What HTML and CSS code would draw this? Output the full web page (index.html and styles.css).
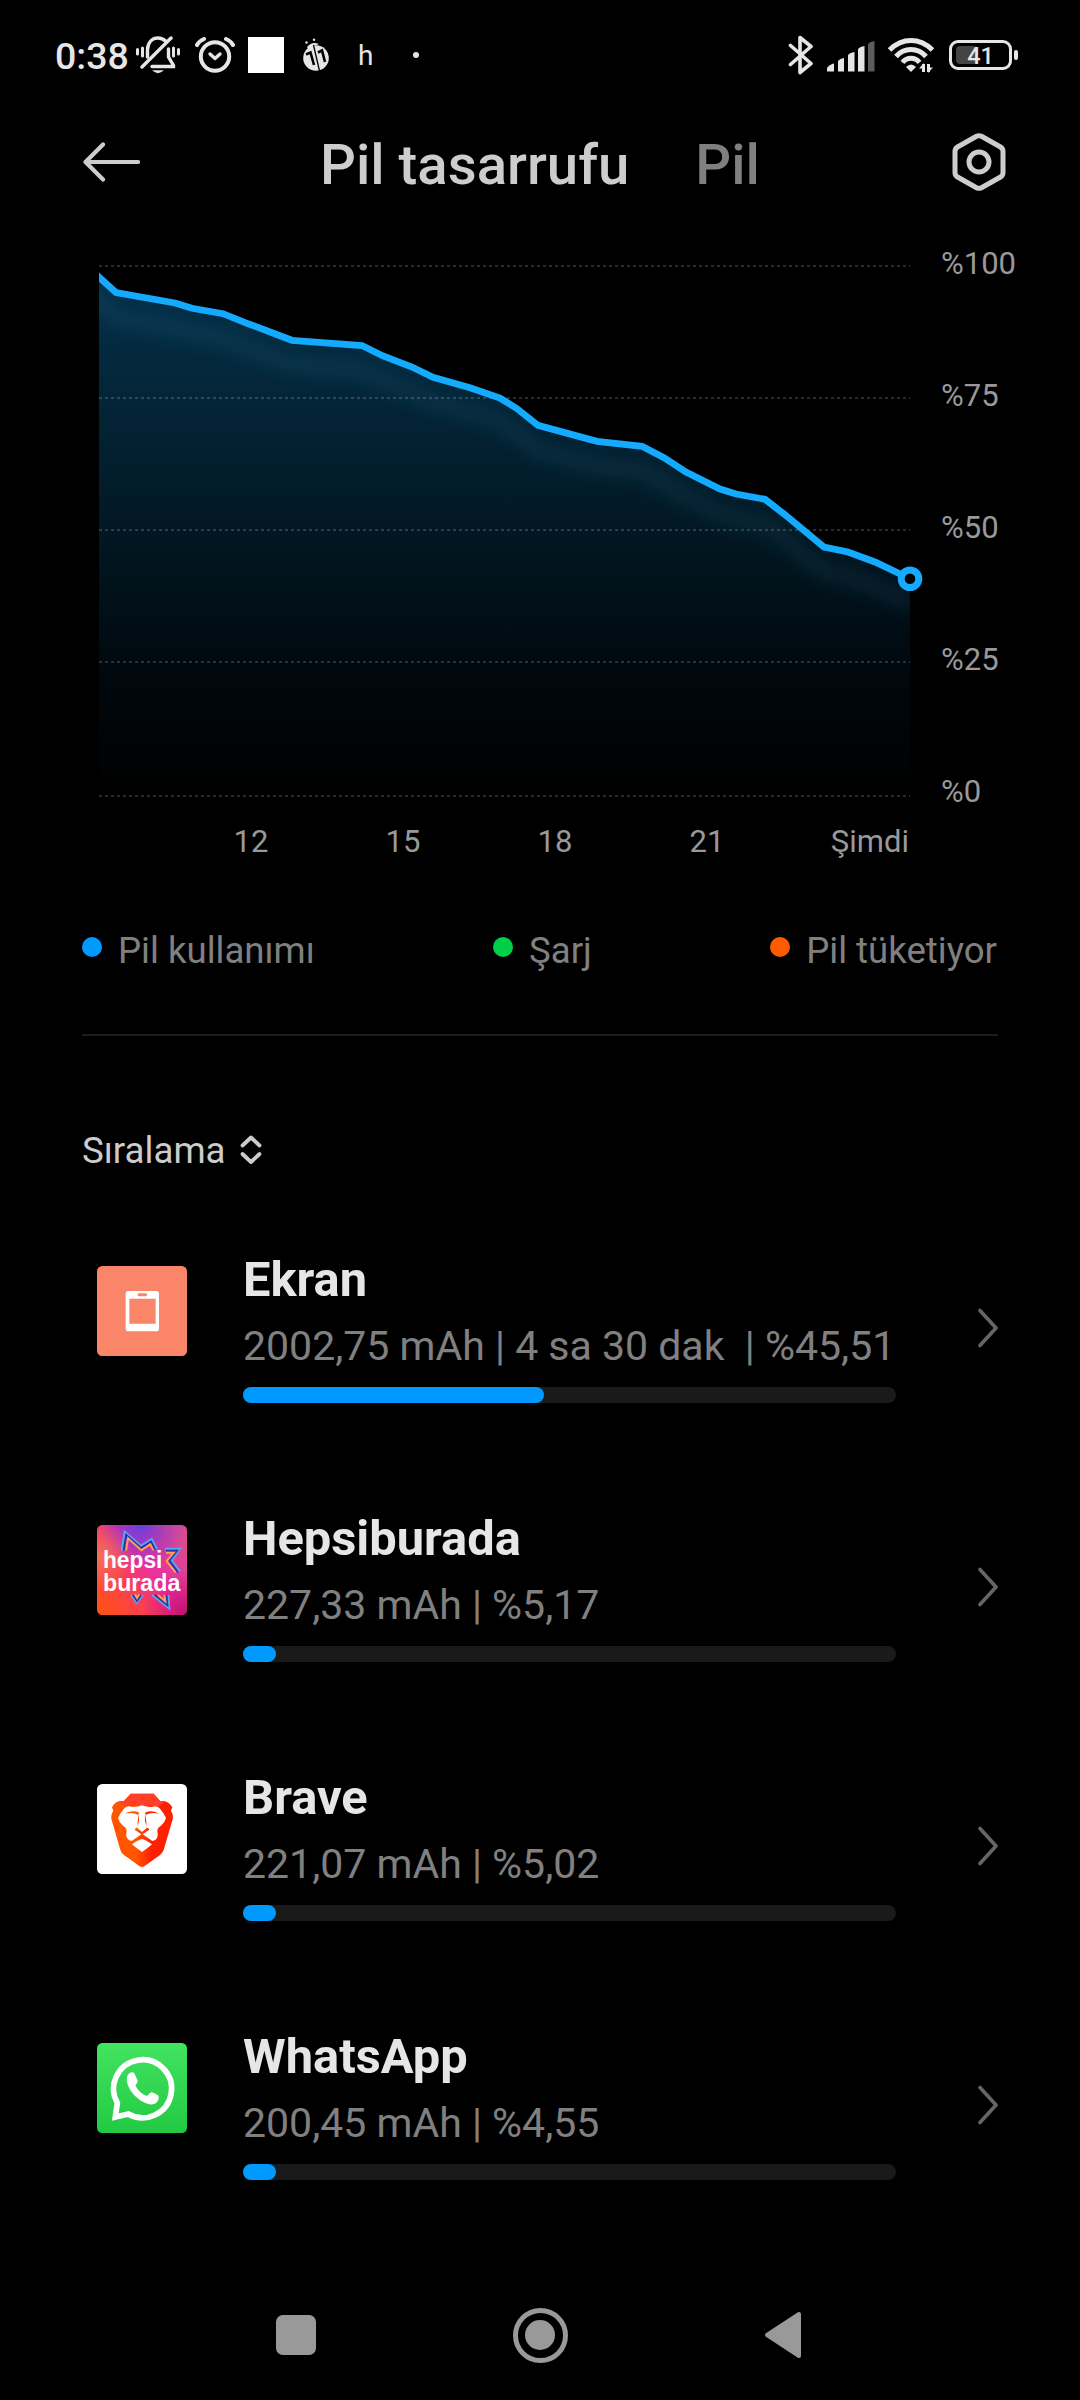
FILE: index.html
```html
<!DOCTYPE html>
<html lang="tr">
<head>
  <meta charset="UTF-8">
  <title>Pil tasarrufu</title>
  <link rel="stylesheet" href="styles.css">
</head>
<body>

  <div class="status-bar">
    <span class="clock">0:38</span>
    <svg class="ic-bell" width="44" height="38" viewBox="0 0 44 38" fill="none" stroke="#e6e6e6" stroke-width="3.4" stroke-linecap="round">
      <path d="M11.5 21V13.500C12 6 16.500 2 22 2C25 2 27.500 3 29.500 5M32.500 13V21L37.500 29.500V30.500H16"/>
      <path d="M6 31L35 2"/>
      <path d="M1.500 13.500V18M6.500 12V20M37.500 12V20M42.500 13.500V18" stroke-width="3"/>
      <path d="M16 34.300H28Q22 40 16 34.300Z" fill="#e6e6e6" stroke="none"/>
    </svg>
    <svg class="ic-alarm" width="40" height="37" viewBox="0 0 40 37" fill="none" stroke="#e6e6e6" stroke-width="4" stroke-linecap="round">
      <circle cx="20" cy="19.500" r="14.200"/>
      <path d="M15 17L20 21.500L25 17" stroke-width="3.400" stroke-linejoin="round"/>
      <path d="M2 8Q4 4 9 2M31 2Q36 4 38 8"/>
    </svg>
    <span class="square"></span>
    <svg class="ic-bug" width="26" height="34" viewBox="0 0 26 34">
      <circle cx="13" cy="20" r="12.800" fill="#e6e6e6"/>
      <path d="M4 9Q9 3 16 6Q9 8 6 12Z" fill="#e6e6e6"/>
      <circle cx="3.500" cy="4.500" r="1.200" fill="#e6e6e6"/>
      <circle cx="11" cy="1.800" r="1.200" fill="#e6e6e6"/>
      <path d="M10.500 7L16.500 33" stroke="#000" fill="none" stroke-width="1.300"/>
      <path d="M3 16.500L7.500 14.500L11 27M15 14.500L19 12.500L22 24" stroke="#000" fill="none" stroke-width="2.600"/>
    </svg>
    <span class="letter">h</span>
    <span class="more-dot"></span>

    <div class="status-right">
      <svg width="26" height="40" viewBox="0 0 26 40" fill="none" stroke="#e6e6e6" stroke-width="3.600" stroke-linecap="round" stroke-linejoin="round">
        <path d="M2.500 10.500L23 28.500L12 37.500V2.500L23 11.500L2.500 29.500"/>
      </svg>
      <svg class="ic-signal" width="48" height="31" viewBox="0 0 48 31" fill="#e6e6e6">
        <path d="M0 30.500V27Q3 23 7 22.500V30.500Z"/>
        <path d="M11 30.500V20Q13 17.500 17 17V30.500Z"/>
        <path d="M21 30.500V14Q23 11.500 27.500 11V30.500Z"/>
        <path d="M31 30.500V8Q33 5.500 37.500 5V30.500Z"/>
        <path d="M41 30.500V3Q43 .5 47.500 0V30.500Z" fill="#5c5c5c"/>
      </svg>
      <svg class="ic-wifi" width="46" height="36" viewBox="0 0 46 36" fill="none" stroke="#e6e6e6" stroke-width="5">
        <path d="M1.500 13Q11 3.500 23 3.500T44.500 13"/>
        <path d="M8 19.500Q14 12.500 23 12.500T38 19.500"/>
        <path d="M14.500 25.500Q18 21.300 23 21.300T31.500 25.500"/>
        <path d="M18 30Q23 25 28 30L23 35Z" fill="#e6e6e6" stroke="none"/>
        <path d="M35.500 27V35M40.500 35V27" stroke-width="3"/>
        <path d="M31 31.500L36 26V31.500ZM45 30.500L40 36V30.500Z" fill="#e6e6e6" stroke="none"/>
      </svg>
      <div class="battery">
        <span class="battery-fill"></span>
        <span class="battery-text">41</span>
      </div>
      <span class="battery-tip"></span>
    </div>
  </div>

  <div class="header">
    <svg class="back" width="58" height="40" viewBox="0 0 58 40" fill="none" stroke="#cdcdcd" stroke-width="4.200" stroke-linecap="round" stroke-linejoin="round">
      <path d="M21 2.500L3.500 20L21 37.500M3.500 20H56"/>
    </svg>
    <span class="tab active">Pil tasarrufu</span>
    <span class="tab">Pil</span>
    <svg class="gear" width="56" height="60" viewBox="0 0 56 60" fill="none" stroke="#cdcdcd" stroke-width="5" stroke-linejoin="round">
      <path d="M25.500 4.300Q28 3 30.500 4.300L49.500 15Q52 16.500 52 19.500V40.500Q52 43.500 49.500 45L30.500 55.700Q28 57 25.500 55.700L6.500 45Q4 43.500 4 40.500V19.500Q4 16.500 6.500 15Z"/>
      <circle cx="28" cy="30" r="10"/>
    </svg>
  </div>

  <div class="chart">
    <svg class="plot" width="811" height="560" viewBox="99 244 811 560">
      <defs>
        <linearGradient id="areaFill" x1="0" y1="277" x2="0" y2="796" gradientUnits="userSpaceOnUse">
          <stop offset="0" stop-color="#04304a"/>
          <stop offset=".25" stop-color="#032436"/>
          <stop offset=".5" stop-color="#021722"/>
          <stop offset=".75" stop-color="#00090f"/>
          <stop offset="1" stop-color="#000"/>
        </linearGradient>
        <clipPath id="areaClip">
          <path d="M99 277L116 292.500L175 303L192 308.300L223 313.700L247 323.300L292 340.300L362 345.500L383 356L412 367L433 377.300L470 387.700L500 398L517 408.700L538 425.300L597 441.300L642 446.300L664 457.700L686 472L720 489L736 494L765 499.300L784 514L824 547L848 552L875 562L910 578.700V796H99Z"/>
        </clipPath>
        <filter id="soft" x="-10%" y="-20%" width="120%" height="140%">
          <feGaussianBlur stdDeviation="8"/>
        </filter>
      </defs>
      <g clip-path="url(#areaClip)">
        <rect x="99" y="266" width="811" height="530" fill="url(#areaFill)"/>
        <path class="glow" filter="url(#soft)" transform="translate(0 25)" d="M80 262L116 292.500L175 303L192 308.300L223 313.700L247 323.300L292 340.300L362 345.500L383 356L412 367L433 377.300L470 387.700L500 398L517 408.700L538 425.300L597 441.300L642 446.300L664 457.700L686 472L720 489L736 494L765 499.300L784 514L824 547L848 552L875 562L910 578.700"/>
      </g>
      <path class="grid-lines" d="M99 266H910M99 398H910M99 530H910M99 662H910M99 796H910"/>
      <path class="level" d="M95 273.400L116 292.500L175 303L192 308.300L223 313.700L247 323.300L292 340.300L362 345.500L383 356L412 367L433 377.300L470 387.700L500 398L517 408.700L538 425.300L597 441.300L642 446.300L664 457.700L686 472L720 489L736 494L765 499.300L784 514L824 547L848 552L875 562L910 578.700"/>
      <rect x="90" y="260" width="9" height="30" fill="#000"/>
      <circle class="now" cx="910" cy="578.700" r="8.800"/>
    </svg>
    <div class="y-axis">
      <span>%100</span>
      <span>%75</span>
      <span>%50</span>
      <span>%25</span>
      <span>%0</span>
    </div>
  </div>
  <div class="x-axis">
    <span>12</span>
    <span>15</span>
    <span>18</span>
    <span>21</span>
    <span class="now-label">Şimdi</span>
  </div>

  <div class="legend">
    <span><i class="dot blue"></i>Pil kullanımı</span>
    <span><i class="dot green"></i>Şarj</span>
    <span><i class="dot orange"></i>Pil tüketiyor</span>
  </div>

  <div class="sort">
    Sıralama
    <svg width="22" height="30" viewBox="0 0 22 30" fill="none" stroke="#ccc" stroke-width="3.800" stroke-linecap="round" stroke-linejoin="round">
      <path d="M2.500 10.500L11 2.500L19.500 10.500M2.500 19L11 27L19.500 19"/>
    </svg>
  </div>

  <div class="app-row">
    <svg class="app-icon" viewBox="0 0 270 270">
      <rect width="270" height="270" rx="16" fill="#fb8569"/>
      <path d="M94 75H178Q186 75 186 83V188Q186 196 178 196H94Q86 196 86 188V83Q86 75 94 75ZM97 98V173H176V98Z" fill="#fff" fill-rule="evenodd"/>
      <rect x="122" y="82" width="28" height="9" rx="4" fill="#fb8569"/>
    </svg>
    <div class="info">
      <div class="name">Ekran</div>
      <div class="usage">2002,75 mAh | 4 sa 30 dak&nbsp; | %45,51</div>
      <div class="bar"><div class="bar-fill" style="width: 301px"></div></div>
    </div>
    <svg class="chevron" width="22" height="40" viewBox="0 0 22 40"><path d="M3 2.500L19 20L3 37.500"/></svg>
  </div>

  <div class="app-row">
    <svg class="app-icon" viewBox="0 0 270 270">
      <defs>
        <linearGradient id="hbBase" x1="0" y1="1" x2="1" y2=".3">
          <stop offset="0" stop-color="#ff5412"/>
          <stop offset=".35" stop-color="#fb4148"/>
          <stop offset=".65" stop-color="#ea30a0"/>
          <stop offset="1" stop-color="#d84a92"/>
        </linearGradient>
        <radialGradient id="hbBlue" cx=".48" cy="0" r=".5">
          <stop offset="0" stop-color="#6440e0"/>
          <stop offset="1" stop-color="#8a30d0" stop-opacity="0"/>
        </radialGradient>
        <radialGradient id="hbWarm" cx="0" cy=".35" r=".4">
          <stop offset="0" stop-color="#f4705a"/>
          <stop offset="1" stop-color="#f4705a" stop-opacity="0"/>
        </radialGradient>
        <radialGradient id="hbDark" cx="1" cy="1" r=".5">
          <stop offset="0" stop-color="#c0106e"/>
          <stop offset="1" stop-color="#d0106e" stop-opacity="0"/>
        </radialGradient>
      </defs>
      <rect width="270" height="270" rx="16" fill="url(#hbBase)"/>
      <rect width="270" height="270" rx="16" fill="url(#hbBlue)"/>
      <rect width="270" height="270" rx="16" fill="url(#hbWarm)"/>
      <rect width="270" height="270" rx="16" fill="url(#hbDark)"/>
      <g fill="none" stroke-width="6">
        <path stroke="#58a6f5" d="M74 77L83 20L132 62L164 42L180 72M204 71H249L224 106L249 140M102 210L119 234L138 210M165 210L217 251L214 210"/>
        <path stroke="#2436b0" d="M80 77L88 30L132 69L162 50L174 74M207 77H240L217 107L243 142M108 210L120 227L132 210M174 210L211 240L208 210"/>
        <path stroke="#ffa04a" d="M87 77L93 40L133 76L160 58L169 76M207 83H230L209 108L236 143M114 208L120 219L127 208M183 210L205 229L202 210"/>
      </g>
      <text class="hb-text" x="18" y="128" textLength="178" lengthAdjust="spacingAndGlyphs">hepsi</text>
      <text class="hb-text" x="18" y="198" textLength="232" lengthAdjust="spacingAndGlyphs">burada</text>
    </svg>
    <div class="info">
      <div class="name">Hepsiburada</div>
      <div class="usage">227,33 mAh | %5,17</div>
      <div class="bar"><div class="bar-fill" style="width: 33px"></div></div>
    </div>
    <svg class="chevron" width="22" height="40" viewBox="0 0 22 40"><path d="M3 2.500L19 20L3 37.500"/></svg>
  </div>

  <div class="app-row">
    <svg class="app-icon" viewBox="0 0 270 270">
      <defs>
        <linearGradient id="lion" x1="0" y1="0" x2="1" y2="0">
          <stop offset=".4" stop-color="#ff5500"/>
          <stop offset=".65" stop-color="#ff2000"/>
        </linearGradient>
      </defs>
      <rect width="270" height="270" rx="16" fill="#fff"/>
      <path fill="url(#lion)" d="M101 29H170L190 52C205 48 218 55 226 70L222 80C228 90 229 98 227 106L200 198Q196 208 188 214L143 246Q135 252 127 246L82 214Q72 206 70 198L43 104C42 95 44 88 49 80L45 70C52 55 64 48 80 52Z"/>
      <path fill="#ff4026" d="M101 29H170L190 52L204 50Q192 69 172 66Q155 66 135 63Q115 66 98 66Q78 69 66 50L80 52Z"/>
      <path fill="#fff" d="M94 67Q115 72 135 64Q155 72 176 67Q190 68 207 102Q204 115 192 125Q177 134 182 148Q184 160 175 168L166 171L137 151L155 139Q159 137 154 133L148 130Q149 116 146 93Q162 84 187 89Q163 77 146 85Q140 88 140 95L149 132L135 143L121 132L130 95Q130 88 124 85Q107 77 83 89Q108 84 124 93Q121 116 122 130L116 133Q111 137 115 139L133 151L104 171L95 168Q86 160 88 148Q93 134 78 125Q66 115 63 102Q80 68 94 67Z"/>
      <path fill="#fff" d="M124 88H146L143 112L148 131L135 143L122 131L127 112Z"/>
      <path fill="#fff" d="M105 181Q127 166 135 165Q143 166 165 181Q153 192 135 204Q117 192 105 181Z"/>
    </svg>
    <div class="info">
      <div class="name">Brave</div>
      <div class="usage">221,07 mAh | %5,02</div>
      <div class="bar"><div class="bar-fill" style="width: 33px"></div></div>
    </div>
    <svg class="chevron" width="22" height="40" viewBox="0 0 22 40"><path d="M3 2.500L19 20L3 37.500"/></svg>
  </div>

  <div class="app-row">
    <svg class="app-icon" viewBox="0 0 270 270">
      <defs>
        <linearGradient id="wa" x1="0" y1="0" x2="0" y2="1">
          <stop offset="0" stop-color="#42e360"/>
          <stop offset="1" stop-color="#22c943"/>
        </linearGradient>
      </defs>
      <rect width="270" height="270" rx="16" fill="url(#wa)"/>
      <path fill="none" stroke="#fff" stroke-width="17" d="M55 222L61 180A87 87 0 1 1 94 213Z"/>
      <path fill="#fff" d="M90 103C92 93 99 88 106 88C110 88 112 90 114 95L122 113C123 117 117 124 115 127C122 142 136 155 150 159C154 157 159 148 164 148C170 149 180 155 185 159C186 170 182 180 171 183C160 187 140 182 122 166C100 148 86 122 90 103Z"/>
    </svg>
    <div class="info">
      <div class="name">WhatsApp</div>
      <div class="usage">200,45 mAh | %4,55</div>
      <div class="bar"><div class="bar-fill" style="width: 33px"></div></div>
    </div>
    <svg class="chevron" width="22" height="40" viewBox="0 0 22 40"><path d="M3 2.500L19 20L3 37.500"/></svg>
  </div>

  <div class="nav-bar">
    <span class="nav-square"></span>
    <span class="nav-home"><span></span></span>
    <svg width="38" height="48" viewBox="0 0 38 48"><path d="M3 24L35 3V45Z" fill="#999" stroke="#999" stroke-width="4" stroke-linejoin="round"/></svg>
  </div>

</body>
</html>
```

FILE: styles.css
```css
* {
  box-sizing: border-box;
}
body {
  margin: 0;
  width: 1080px;
  height: 2400px;
  background: #000;
  color: #ccc;
  font-family: Roboto, sans-serif;
  overflow: hidden;
}
svg {
  display: block;
  flex-shrink: 0;
}

/* status bar */
.status-bar {
  height: 110px;
  padding: 0 62px 0 55px;
  display: flex;
  align-items: center;
  color: #e6e6e6;
}
.clock {
  font-size: 37.5px;
  font-weight: 500;
  width: 81px;
  line-height: 40px;
  margin-top: 2px;
}
.ic-alarm {
  margin-left: 15px;
}
.square {
  width: 36px;
  height: 36px;
  background: #fff;
  margin-left: 13px;
}
.ic-bug {
  margin-left: 19px;
}
.letter {
  font-size: 28px;
  margin-left: 29px;
  width: 16px;
}
.more-dot {
  width: 6px;
  height: 6px;
  border-radius: 50%;
  background: #e6e6e6;
  margin-left: 39px;
}
.status-right {
  margin-left: auto;
  display: flex;
  align-items: center;
}
.ic-signal {
  margin-left: 13px;
  margin-top: 2px;
}
.ic-wifi {
  margin-left: 13px;
}
.battery {
  width: 63px;
  height: 30px;
  border: 3px solid #e6e6e6;
  border-radius: 9px;
  margin-left: 15px;
  padding: 3px 4px;
  position: relative;
}
.battery-fill {
  display: block;
  width: 21px;
  height: 18px;
  border-radius: 4px;
  background: #444;
}
.battery-text {
  position: absolute;
  left: 0;
  right: 0;
  top: 0;
  line-height: 26px;
  text-align: center;
  font-size: 23.5px;
  font-weight: 500;
}
.battery-tip {
  width: 4px;
  height: 10px;
  border-radius: 2px;
  background: #e6e6e6;
  margin-left: 2px;
}

/* header */
.header {
  height: 104px;
  padding: 0 73px 0 82px;
  display: flex;
  align-items: center;
}
.tab {
  font-size: 56.3px;
  font-weight: 500;
  color: #808080;
  margin-left: 66px;
  margin-top: 5px;
  white-space: nowrap;
}
.tab.active {
  color: #cdcdcd;
  margin-left: 180px;
}
.gear {
  margin-left: auto;
}

/* chart */
.chart {
  padding: 30px 0 0 99px;
  display: flex;
}
.plot {
  overflow: visible;
}
.glow {
  fill: none;
  stroke: #3a86b0;
  stroke-opacity: .12;
  stroke-width: 18;
}
.grid-lines {
  fill: none;
  stroke: #fff;
  stroke-opacity: .17;
  stroke-width: 2;
  stroke-dasharray: 3 3;
}
.level {
  fill: none;
  stroke: #14abff;
  stroke-width: 6.8;
}
.now {
  fill: #000;
  stroke: #14abff;
  stroke-width: 7;
}
.y-axis {
  display: flex;
  flex-direction: column;
  gap: 92px;
  margin-left: 31px;
  height: 560px;
  font-size: 31px;
  line-height: 40px;
  color: #999;
}
.x-axis {
  display: flex;
  margin: 18px 171px 0 175px;
  font-size: 31px;
  line-height: 40px;
  color: #999;
}
.x-axis span {
  width: 152px;
  text-align: center;
}
.x-axis .now-label {
  width: auto;
  margin-left: auto;
}

.legend {
  display: flex;
  justify-content: space-between;
  margin: 0 82px;
  padding: 64px 1px 0 0;
  height: 174px;
  border-bottom: 2px solid #1c1c1c;
  font-size: 36.6px;
  line-height: 50px;
  color: #808080;
}
.legend span {
  display: flex;
}
.dot {
  width: 20px;
  height: 20px;
  border-radius: 50%;
  margin: 11px 16px 0 0;
}
.blue {
  background: #0099ff;
}
.green {
  background: #00d047;
}
.orange {
  background: #ff5a00;
}

.sort {
  display: flex;
  align-items: center;
  gap: 14px;
  height: 48px;
  margin: 90px 82px 61px;
  font-size: 36.7px;
}

/* app list */
.app-row {
  display: flex;
  height: 259px;
  padding: 0 81px 0 97px;
}
.app-icon {
  width: 90px;
  height: 90px;
  margin-top: 31px;
}
.info {
  width: 653px;
  margin-left: 56px;
  padding-top: 15px;
}
.name {
  font-size: 48.8px;
  font-weight: 700;
  line-height: 60px;
  color: #e6e6e6;
}
.usage {
  margin-top: 9px;
  font-size: 41px;
  line-height: 54px;
  color: #808080;
  white-space: nowrap;
}
.bar {
  margin-top: 14px;
  height: 16px;
  border-radius: 8px;
  background: #1a1a1a;
}
.bar-fill {
  height: 16px;
  border-radius: 8px;
  background: #0099ff;
}
.chevron {
  margin: 73px 0 0 auto;
  fill: none;
  stroke: #666;
  stroke-width: 3.6;
  stroke-linecap: round;
  stroke-linejoin: round;
}
.hb-text {
  font-family: "Liberation Sans", Arial, sans-serif;
  font-size: 74px;
  font-weight: 700;
  fill: #fff;
}

/* navigation bar */
.nav-bar {
  height: 128px;
  padding: 0 278px 0 276px;
  display: flex;
  align-items: center;
  justify-content: space-between;
}
.nav-square {
  width: 40px;
  height: 40px;
  border-radius: 7px;
  background: #999;
}
.nav-home {
  width: 55px;
  height: 55px;
  border: 5px solid #999;
  border-radius: 50%;
  display: flex;
  align-items: center;
  justify-content: center;
}
.nav-home span {
  width: 30px;
  height: 30px;
  border-radius: 50%;
  background: #999;
}
```
